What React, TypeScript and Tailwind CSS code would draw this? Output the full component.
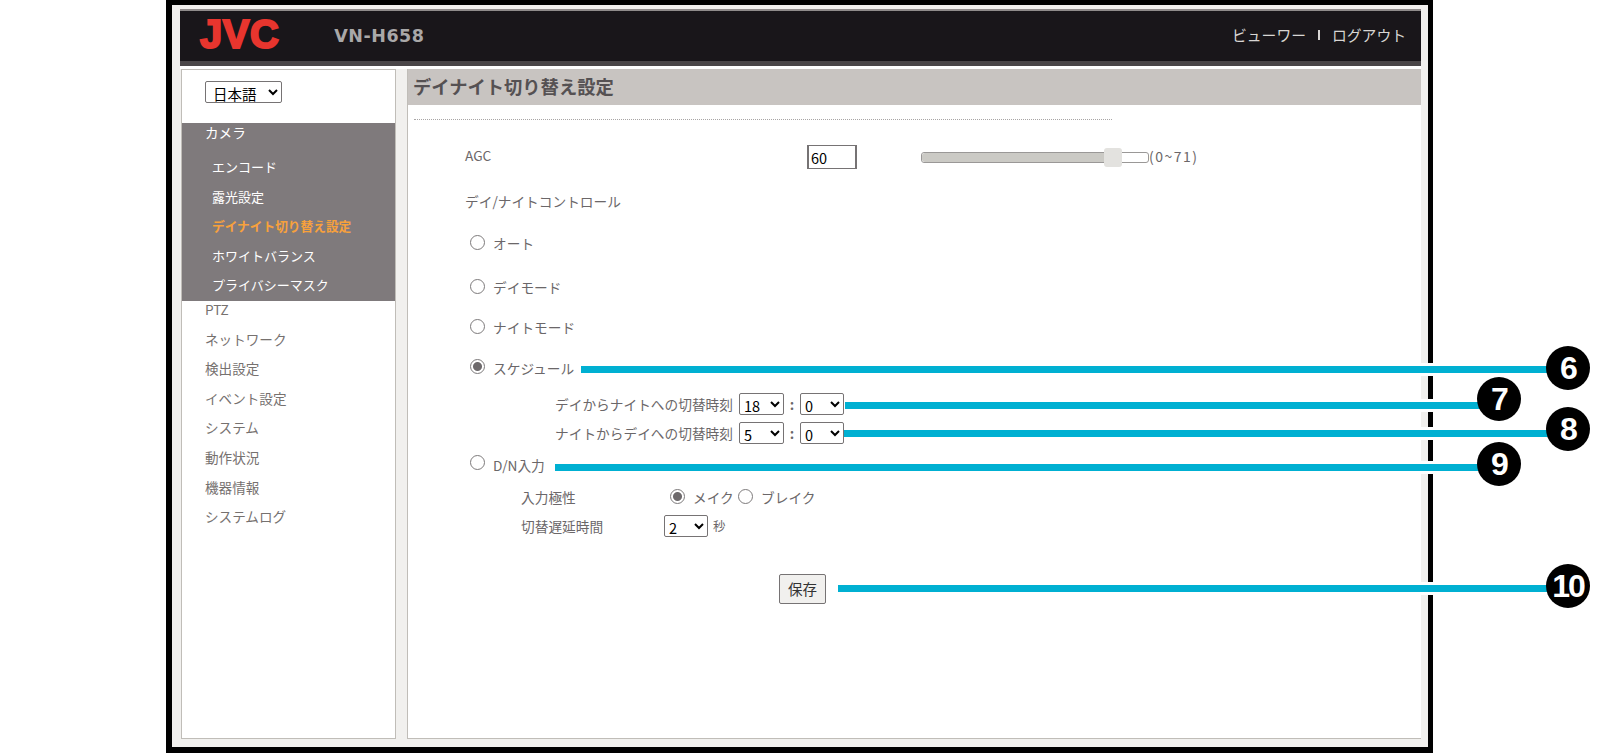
const font = { fontFamily: '"Noto Sans CJK JP", "Noto Sans", sans-serif' };

function Radio({ checked = false, up = false }: { checked?: boolean; up?: boolean }) {
  return (
    <input
      type="radio"
      readOnly
      checked={checked}
      className={`m-0 w-[15px] h-[15px] shrink-0 appearance-none rounded-full border border-[#7d7a7b] bg-white checked:bg-[radial-gradient(circle,#6e6a6c_0,#6e6a6c_4px,#ffffff_5px)] ${up ? '-translate-y-[3px]' : '-translate-y-px'}`}
    />
  );
}

function Sel({ value, w, opts }: { value: string; w: string; opts: string[] }) {
  return (
    <select
      defaultValue={value}
      className={`${w} h-[22px] rounded-[2px] border border-[#767374] bg-white pl-0 text-[14.5px] leading-[20px] text-black`}
    >
      {opts.map((o) => (
        <option key={o}>{o}</option>
      ))}
    </select>
  );
}

function Callout({ top, left, right, n, cx, cy }: { top: string; left: string; right: string; n: string; cx: string; cy: string }) {
  return (
    <>
      <div className={`absolute ${top} ${left} ${right} h-[13px] border-y-[3px] border-white bg-[#00b0d2]`} />
      <div
        className={`absolute ${cx} ${cy} flex h-[44px] w-[44px] items-center justify-center rounded-full bg-black text-[32px] font-bold leading-none tracking-[-2px] text-white`}
        style={{ fontFamily: '"Liberation Sans", Arial, sans-serif' }}
      >
        {n}
      </div>
    </>
  );
}

const subs = ['エンコード', '露光設定', 'デイナイト切り替え設定', 'ホワイトバランス', 'プライバシーマスク'];
const tops = ['PTZ', 'ネットワーク', '検出設定', 'イベント設定', 'システム', '動作状況', '機器情報', 'システムログ'];

export default function App() {
  return (
    <div className="relative h-[753px] w-[1598px] overflow-hidden bg-white text-[#6b6769]" style={font}>
      <div className="ml-[166px] flex h-[753px] w-[1267px] flex-col border-l-[6px] border-r-[5px] border-t-[5px] border-b-[6px] border-black bg-[#f1f0ee] pl-[8px] pr-[7px] pt-[4px]">
        <header className="flex h-[57px] shrink-0 items-start border-t-2 border-[#8f8b8b] bg-[#19161a] shadow-[inset_0_-5px_0_#4a4648]">
          <span
            className="ml-[20px] mt-[1px] text-[40px] font-bold leading-[44px] tracking-[0.5px] text-[#e8352e] [-webkit-text-stroke:2px_#e8352e]"
            style={{ fontFamily: '"Liberation Sans", Arial, sans-serif' }}
          >
            JVC
          </span>
          <span
            className="ml-[55px] mt-[13px] text-[17.5px] font-bold leading-[24px] tracking-[0.5px] text-[#a9a8a8]"
            style={{ fontFamily: '"DejaVu Sans", sans-serif' }}
          >
            VN-H658
          </span>
          <div className="ml-auto mr-[15px] mt-[12px] flex items-center text-[14.8px] leading-[24px] text-[#d8d6d4]">
            <span>ビューワー</span>
            <span className="mx-[12px] h-[10px] w-[2px] bg-[#d8d6d4]" />
            <span>ログアウト</span>
          </div>
        </header>
        <div className="h-[3px] shrink-0 bg-white" />
        <div className="flex min-h-0 flex-1 pb-[8px]">
          <aside className="ml-px w-[215px] shrink-0 border border-[#c0bdb8] bg-white">
            <div className="h-[53px] pl-[23px] pt-[11px]">
              <select
                defaultValue="日本語"
                className="h-[22px] w-[77px] rounded-[2px] border border-[#767374] bg-white pl-[3px] text-[14.5px] leading-[20px] text-black"
              >
                <option>日本語</option>
                <option>English</option>
              </select>
            </div>
            <div className="h-[178px] bg-[#7f7a7c]">
              <div className="h-[30px] pl-[23px] text-[13.6px] leading-[18px] text-white">カメラ</div>
              {subs.map((s, i) => (
                <div
                  key={s}
                  className={`h-[29.5px] pl-[30px] pt-[5px] leading-[18px] ${i === 2 ? 'text-[12.7px] font-bold text-[#f7a13c]' : 'text-[13px] text-white'}`}
                >
                  {s}
                </div>
              ))}
            </div>
            {tops.map((s) => (
              <div key={s} className="h-[29.6px] pl-[23px] text-[13.6px] leading-[17px] text-[#76716f]">
                {s}
              </div>
            ))}
          </aside>
          <main className="ml-[11px] flex-1 border-b border-l border-[#c0bdb8] bg-white text-[13.7px]">
            <div className="flex h-[36px] items-center bg-[#c8c4c1] pl-[5px] text-[18.3px] font-bold text-[#555153]">
              デイナイト切り替え設定
            </div>
            <div className="ml-[6px] mt-[14px] w-[698px] border-t border-dotted border-[#a8a5a5]" />

            <div className="ml-[57px] mt-[25px] flex h-[24px] items-center">
              <span className="w-[342px] -translate-y-[2px]">AGC</span>
              <input
                readOnly
                value="60"
                className="h-[24px] w-[50px] border border-x-2 border-[#767374] pl-[2px] text-[14.5px] text-black outline-none"
              />
              <div className="relative ml-[64px] h-[11px] w-[228px] rounded-[3px] border border-[#9a9897] bg-white">
                <div className="h-full w-[192px] rounded-l-[3px] bg-[#cbcac5]" />
                <div className="absolute left-[182px] top-[-5px] h-[19px] w-[18px] rounded-[3px] bg-[#e3e2df]" />
              </div>
              <span className="-translate-y-px whitespace-nowrap text-[14px] tracking-[1.5px] text-[#6b6769]">(0~71)</span>
            </div>

            <div className="ml-[57px] mt-[20px] flex h-[24px] items-center">デイ/ナイトコントロール</div>

            <label className="ml-[62px] mt-[18px] flex h-[24px] items-center gap-[8px]"><Radio /><span>オート</span></label>
            <label className="ml-[62px] mt-[20px] flex h-[24px] items-center gap-[8px]"><Radio /><span>デイモード</span></label>
            <label className="ml-[62px] mt-[16px] flex h-[24px] items-center gap-[8px]"><Radio /><span>ナイトモード</span></label>
            <label className="ml-[62px] mt-[16px] flex h-[24px] items-center gap-[8px]"><Radio checked /><span className="translate-y-px">スケジュール</span></label>

            <div className="ml-[147px] mt-[14px] flex h-[22px] items-center">
              <span className="w-[184px] whitespace-nowrap">デイからナイトへの切替時刻</span>
              <Sel value="18" w="w-[45px]" opts={['18', '5']} />
              <span className="w-[16px] text-center font-bold">:</span>
              <Sel value="0" w="w-[44px]" opts={['0']} />
            </div>
            <div className="ml-[147px] mt-[7px] flex h-[22px] items-center">
              <span className="w-[184px] whitespace-nowrap">ナイトからデイへの切替時刻</span>
              <Sel value="5" w="w-[45px]" opts={['18', '5']} />
              <span className="w-[16px] text-center font-bold">:</span>
              <Sel value="0" w="w-[44px]" opts={['0']} />
            </div>

            <label className="ml-[62px] mt-[9px] flex h-[24px] items-center gap-[8px]"><Radio up /><span>D/N入力</span></label>

            <div className="ml-[113px] mt-[9px] flex h-[22px] items-center">
              <span className="w-[149px]">入力極性</span>
              <Radio checked />
              <span className="ml-[8px] w-[45px]">メイク</span>
              <Radio />
              <span className="ml-[8px]">ブレイク</span>
            </div>
            <div className="ml-[113px] mt-[7px] flex h-[22px] items-center">
              <span className="w-[143px]">切替遅延時間</span>
              <Sel value="2" w="w-[44px]" opts={['2']} />
              <span className="ml-[5px] text-[12.5px]">秒</span>
            </div>

            <button className="ml-[371px] mt-[37px] block h-[30px] w-[47px] rounded-[2px] border border-[#767374] bg-[#f1f0ee] text-[14.5px] text-[#333]">
              保存
            </button>
          </main>
        </div>
      </div>

      <Callout top="top-[362.5px]" left="left-[581px]" right="right-[40px]" n="6" cx="left-[1546px]" cy="top-[346px]" />
      <Callout top="top-[398.5px]" left="left-[845px]" right="right-[110px]" n="7" cx="left-[1477px]" cy="top-[377px]" />
      <Callout top="top-[426.5px]" left="left-[844px]" right="right-[40px]" n="8" cx="left-[1546px]" cy="top-[407px]" />
      <Callout top="top-[460.5px]" left="left-[555px]" right="right-[110px]" n="9" cx="left-[1477px]" cy="top-[442px]" />
      <Callout top="top-[581.5px]" left="left-[838px]" right="right-[40px]" n="10" cx="left-[1546px]" cy="top-[564px]" />
    </div>
  );
}
